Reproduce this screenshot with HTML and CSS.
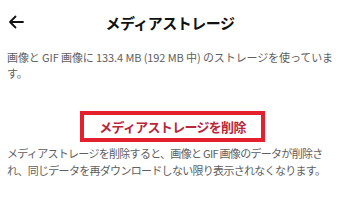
FILE: index.html
```html
<!DOCTYPE html>
<html lang="ja">
<head>
<meta charset="utf-8">
<link rel="stylesheet" href="styles.css">
</head>
<body>
<main class="page">
  <header class="header">
    <div class="back">
      <svg width="16" height="14" viewBox="0 0 16 14" aria-hidden="true">
        <path d="M15 7H2M7.5 1.5L2 7l5.5 5.5" fill="none" stroke="#111" stroke-width="1.8" stroke-linecap="round" stroke-linejoin="round"/>
      </svg>
    </div>
    <h1 class="title">メディアストレージ</h1>
    <div></div>
  </header>
  <section class="usage">
    <div class="row">画像と GIF 画像に 133.4 MB (192 MB 中) のストレージを使っていま</div>
    <div class="row">す。</div>
  </section>
  <div class="action">
    <button class="delete" type="button">メディアストレージを削除</button>
  </div>
  <section class="note">
    <div class="row">メディアストレージを削除すると、画像と GIF 画像のデータが削除さ</div>
    <div class="row">れ、同じデータを再ダウンロードしない限り表示されなくなります。</div>
  </section>
</main>
</body>
</html>
```
FILE: styles.css
```css
html, body {
  margin: 0;
  padding: 0;
  background: #ffffff;
}
body {
  font-family: "Noto Sans CJK JP", "Noto Sans", sans-serif;
  width: 340px;
  height: 200px;
  overflow: hidden;
}
.page {
  display: block;
  padding: 0 7px;
}
.header {
  height: 44px;
  display: grid;
  grid-template-columns: 1fr auto 1fr;
  align-items: center;
}
.back {
  display: flex;
  align-items: center;
  padding-left: 1px;
}
.back svg {
  display: block;
}
.title {
  margin: 0;
  font-size: 15px;
  font-weight: 700;
  color: #111;
  letter-spacing: -0.5px;
}
.row {
  display: block;
  white-space: nowrap;
}
.usage {
  margin-top: 5px;
  font-size: 11px;
  line-height: 16px;
  color: #606060;
  letter-spacing: -0.1px;
}
.action {
  display: flex;
  justify-content: center;
  margin-top: 30px;
}
.delete {
  box-sizing: border-box;
  width: 185px;
  height: 31px;
  border: 4px solid #e3202b;
  background: #fff;
  color: #b8283a;
  font-family: inherit;
  font-size: 13px;
  font-weight: 700;
  letter-spacing: -0.7px;
  padding: 0;
  margin-left: 5px;
}
.note {
  margin-top: 3px;
  font-size: 11px;
  line-height: 17px;
  color: #606060;
  letter-spacing: -0.7px;
}
```
